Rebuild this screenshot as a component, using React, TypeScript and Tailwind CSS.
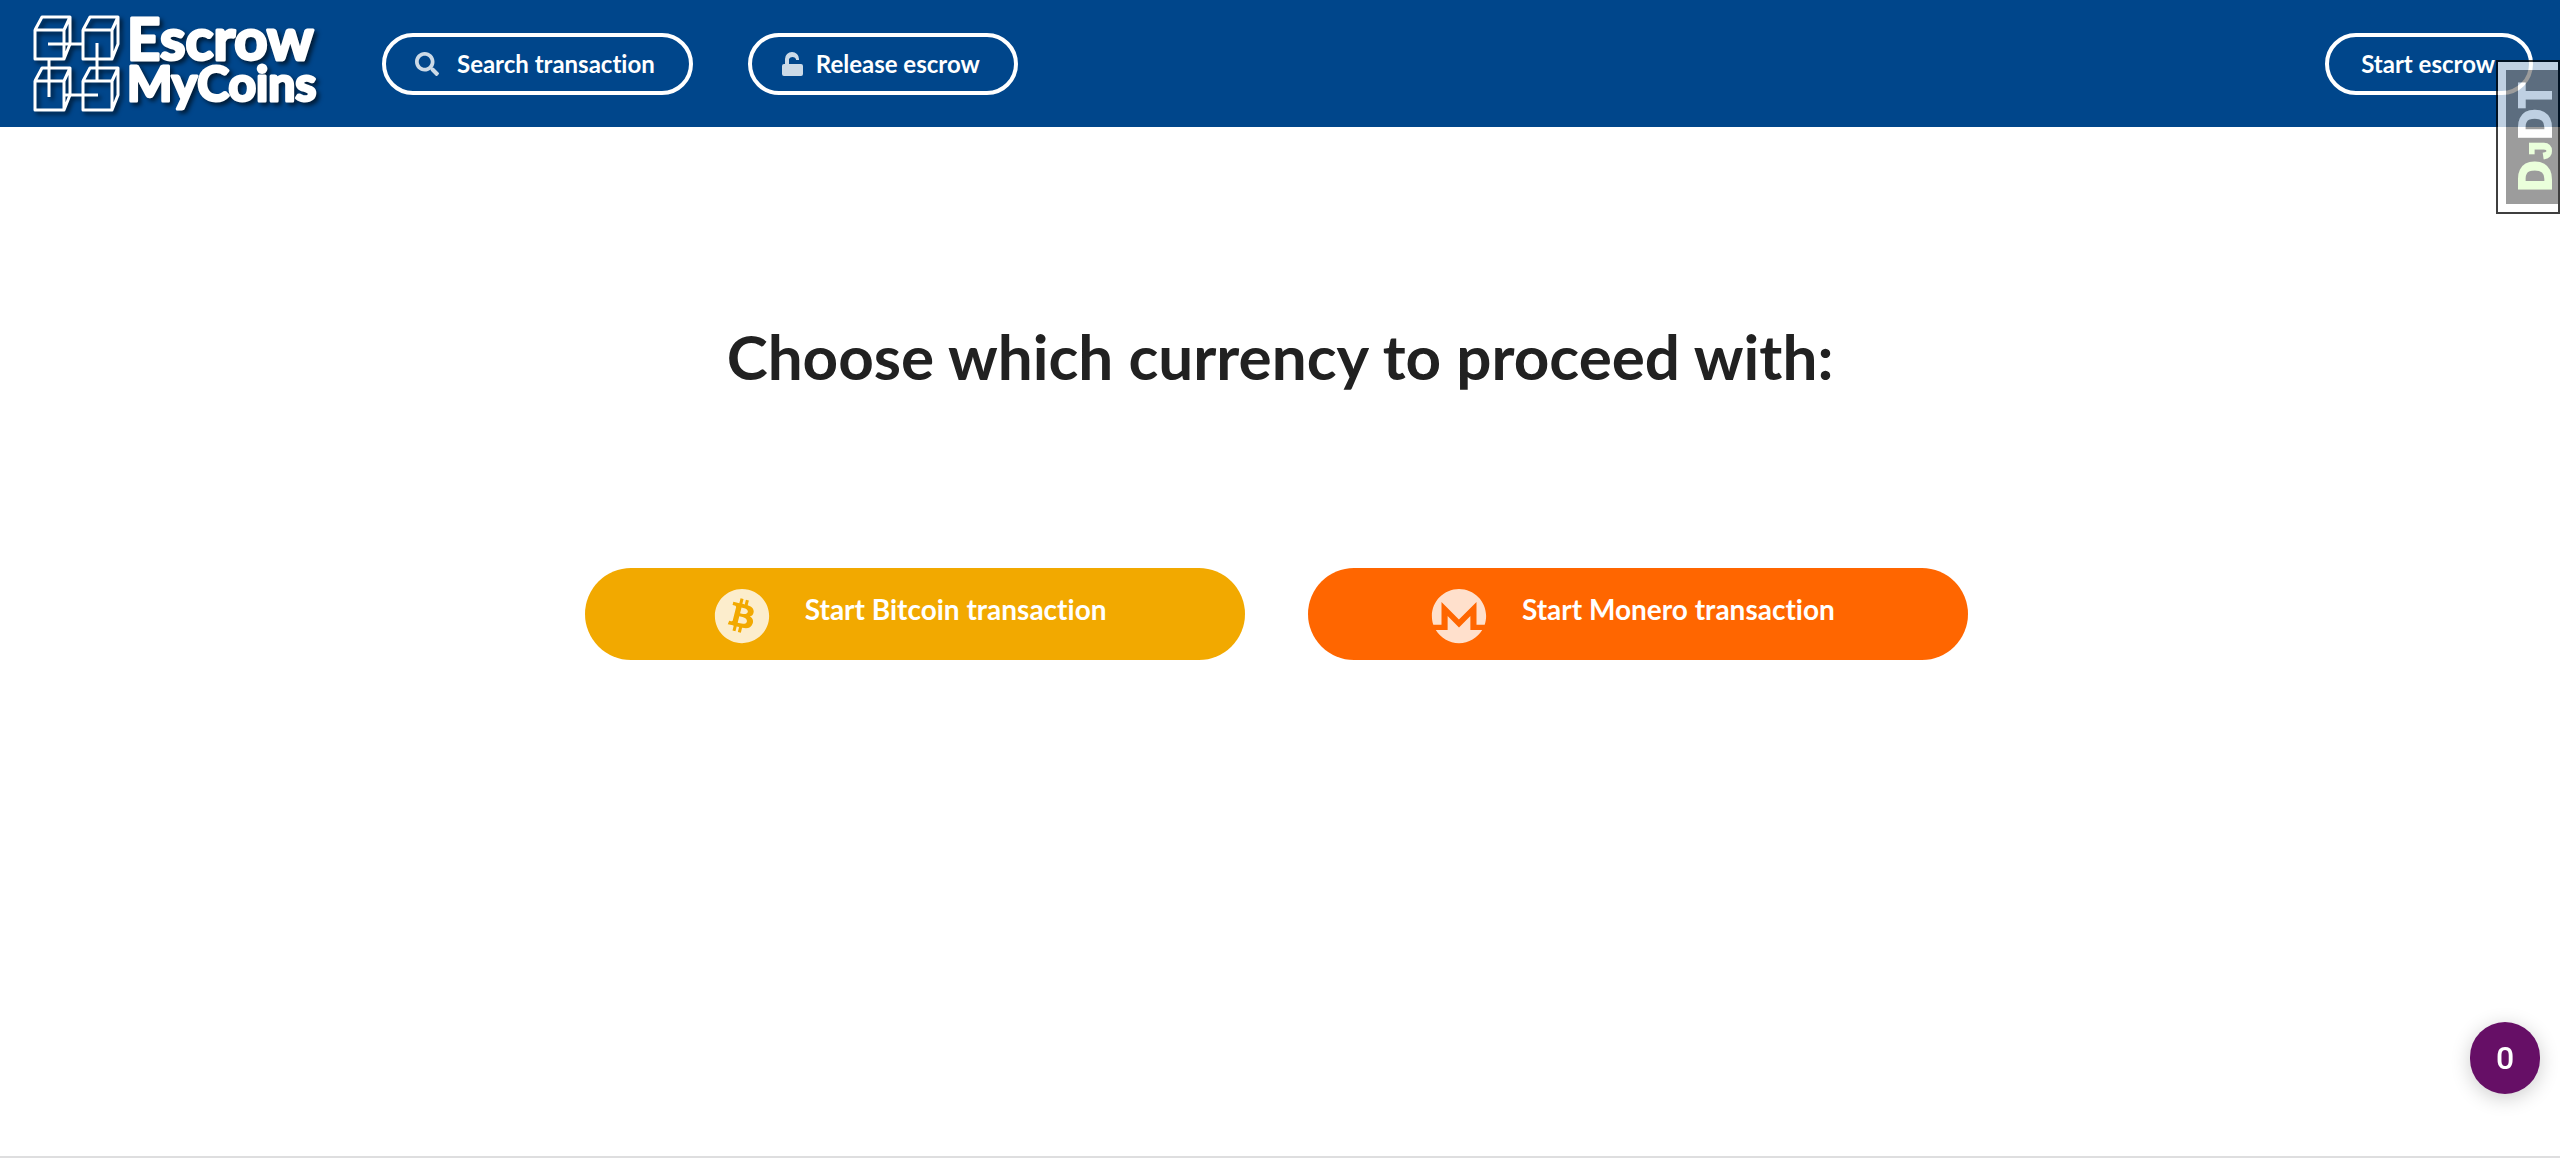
import { FaSearch } from 'react-icons/fa'
import { FaBitcoin, FaMonero } from 'react-icons/fa6'

const navButton =
  'inline-flex h-[62px] items-center rounded-full border-4 border-white pr-[34px] text-2xl font-bold text-white'

const bigButton =
  'flex h-[92px] flex-1 items-center justify-center rounded-full pr-[10px] pb-[10px] text-[28px] font-bold text-white'

const cubes = [
  'M35 30 H64 V59 H35 Z M35 30 L42 17 H70 L64 30 M70 17 V44 L64 59',
  'M83 30 H112 V59 H83 Z M83 30 L90 17 H118 L112 30 M118 17 V44 L112 59',
  'M35 81 H64 V110 H35 Z M35 81 L42 68 H70 L64 81 M70 68 V95 L64 110',
  'M83 81 H112 V110 H83 Z M83 81 L90 68 H118 L112 81 M118 68 V95 L112 110',
]

const Logo = () => (
  <a href="#" aria-label="Escrow MyCoins" className="block">
    <svg viewBox="0 0 340 127" className="h-[127px] w-[340px] drop-shadow-[3px_3px_2px_rgba(0,0,0,0.6)]">
      <g fill="none" stroke="#fff" strokeWidth="3" strokeLinejoin="round">
        {cubes.map((d) => (
          <path key={d} d={d} />
        ))}
        <path d="M48 44 H83 M97 43 V80 M49 60 V97 M65 95 H98" />
      </g>
      <g
        fill="#fff"
        stroke="#fff"
        strokeWidth="3"
        strokeLinejoin="round"
        fontFamily="Lato, sans-serif"
        fontWeight="700"
      >
        <text x="127" y="60" fontSize="58">Escrow</text>
        <text x="127" y="101" fontSize="48">MyCoins</text>
      </g>
    </svg>
  </a>
)

const Header = () => (
  <header className="flex h-[127px] items-center bg-[#00468b] pr-[27px]">
    <Logo />
    <nav className="ml-[42px] flex flex-1 items-center gap-[55px]">
      <button type="button" className={`${navButton} pl-[29px]`}>
        <FaSearch className="mr-[18px] size-6 opacity-80" />
        Search transaction
      </button>
      <button type="button" className={`${navButton} pl-[30px]`}>
        <svg viewBox="0 0 22 24" className="mr-3 h-6 w-[22px] opacity-80" fill="currentColor">
          <path d="M3 12 V7 A7 7 0 0 1 17 7 V8 H14 V7 A4 4 0 0 0 7 7 V12 H19 A2 2 0 0 1 21 14 V22 A2 2 0 0 1 19 24 H2 A2 2 0 0 1 0 22 V14 A2 2 0 0 1 2 12 Z" />
        </svg>
        Release escrow
      </button>
      <button type="button" className={`${navButton} ml-auto pl-8`}>
        Start escrow
      </button>
    </nav>
  </header>
)

const DebugHandle = () => (
  <a
    href="#"
    className="absolute top-[60px] right-0 h-[154px] w-16 border-2 border-black bg-white py-2 pl-2 opacity-75"
  >
    <span className="flex h-[134px] items-center justify-center bg-[#7b7b7b] pl-2">
      <span className="shrink-0 -rotate-90 font-['Open_Sans',sans-serif] text-[44px] leading-none font-bold whitespace-nowrap text-white [-webkit-text-stroke:2px]">
        <span className="text-[#e4ffd0]">
          D<span className="font-['Liberation_Mono',monospace] text-[32px] leading-none">J</span>
        </span>
        DT
      </span>
    </span>
  </a>
)

export default function App() {
  return (
    <div className="relative flex min-h-screen flex-col border-b-2 border-[#dededf] bg-white font-['Lato',sans-serif] [font-variant-ligatures:none]">
      <Header />
      <main className="flex flex-col items-center pt-[188px]">
        <h1 className="text-[62px] leading-[82px] font-bold text-[#212121]">
          Choose which currency to proceed with:
        </h1>
        <div className="mt-[171px] mr-[7px] flex w-[54%] gap-[63px]">
          <button type="button" className={`${bigButton} bg-[#f2a900]`}>
            <FaBitcoin className="mt-[14px] mr-[35px] size-14 opacity-80" />
            Start Bitcoin transaction
          </button>
          <button type="button" className={`${bigButton} bg-[#ff6600]`}>
            <FaMonero className="mt-[14px] mr-[35px] size-14 opacity-80" />
            Start Monero transaction
          </button>
        </div>
      </main>
      <DebugHandle />
      <button
        type="button"
        className="fixed right-5 bottom-16 h-[72px] w-[70px] rounded-full bg-[#660f66] font-['Roboto',sans-serif] text-[32px] font-medium text-white shadow-[0_4px_20px_rgba(0,0,0,0.2)]"
      >
        0
      </button>
    </div>
  )
}
